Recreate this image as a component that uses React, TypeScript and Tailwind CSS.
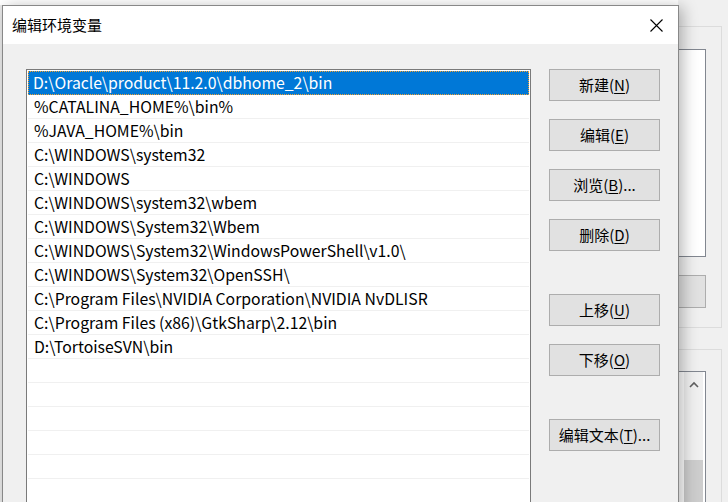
import React from "react";

const paths = [
  "D:\\Oracle\\product\\11.2.0\\dbhome_2\\bin",
  "%CATALINA_HOME%\\bin%",
  "%JAVA_HOME%\\bin",
  "C:\\WINDOWS\\system32",
  "C:\\WINDOWS",
  "C:\\WINDOWS\\system32\\wbem",
  "C:\\WINDOWS\\System32\\Wbem",
  "C:\\WINDOWS\\System32\\WindowsPowerShell\\v1.0\\",
  "C:\\WINDOWS\\System32\\OpenSSH\\",
  "C:\\Program Files\\NVIDIA Corporation\\NVIDIA NvDLISR",
  "C:\\Program Files (x86)\\GtkSharp\\2.12\\bin",
  "D:\\TortoiseSVN\\bin",
  "",
  "",
  "",
  "",
  "",
  "",
  "",
];

const font = { fontFamily: '"Noto Sans CJK SC", "Noto Sans", sans-serif' };

type Btn = { label: string; mk: string; tail?: string; mt: string };

const buttons: Btn[] = [
  { label: "新建", mk: "N", mt: "mt-0" },
  { label: "编辑", mk: "E", mt: "mt-[18px]" },
  { label: "浏览", mk: "B", tail: "...", mt: "mt-[18px]" },
  { label: "删除", mk: "D", mt: "mt-[18px]" },
  { label: "上移", mk: "U", mt: "mt-[43px]" },
  { label: "下移", mk: "O", mt: "mt-[18px]" },
  { label: "编辑文本", mk: "T", tail: "...", mt: "mt-[43px]" },
];

const WinButton: React.FC<Btn> = ({ label, mk, tail, mt }) => (
  <button
    className={`${mt} w-[111px] h-[32px] bg-[#e1e1e1] border border-[#adadad] text-[15px] text-black flex items-center justify-center`}
  >
    {label}(<span className="underline underline-offset-2">{mk}</span>){tail}
  </button>
);

// background window peeking out on the right
const Backdrop: React.FC = () => (
  <div className="absolute inset-0 bg-[#f0f0f0] flex justify-end pr-[6px]">
    <div className="flex flex-col w-[120px]">
      <div className="mt-[26px] h-[302px] border border-[#dcdcdc] flex flex-col items-end pr-[15px]">
        <div className="mt-[22px] w-[80px] h-[208px] bg-white border border-[#828790]" />
        <div className="mt-[18px] w-[80px] h-[33px] bg-[#e1e1e1] border border-[#adadad]" />
      </div>
      <div className="mt-[21px] flex-1 border border-b-0 border-[#dcdcdc] flex flex-col items-end pr-[15px]">
        <div className="mt-[21px] w-[80px] flex-1 bg-white border border-b-0 border-[#828790] flex justify-end pr-[2px]">
          <div className="w-[19px] bg-[#f0f0f0] flex flex-col items-center">
            <svg width="12" height="8" viewBox="0 0 12 8" className="mt-[9px]">
              <path d="M2 6 L6 2 L10 6" stroke="#606060" strokeWidth="1.6" fill="none" />
            </svg>
            <div className="mt-[71px] w-[19px] flex-1 bg-[#cdcdcd]" />
          </div>
        </div>
      </div>
    </div>
  </div>
);

export default function App() {
  return (
    <div className="relative w-[728px] h-[502px] overflow-hidden" style={font}>
      <Backdrop />
      <div className="absolute left-0 top-0 w-[678px] h-[5px] bg-white" />
      <div className="absolute left-0 top-[5px] w-[2px] h-[497px] bg-[#e9e9e9]" />

      {/* dialog */}
      <div className="absolute left-[2px] top-[5px] w-[677px] h-[510px] bg-[#f0f0f0] border border-[#888888] shadow-[4px_2px_14px_rgba(0,0,0,0.28)] flex flex-col">
        <div className="h-[38px] bg-white flex items-center justify-between pl-[9px] pr-[15px] shrink-0">
          <span className="text-[15px] text-black">编辑环境变量</span>
          <svg width="13" height="13" viewBox="0 0 13 13">
            <path d="M0.5 0.5 L12.5 12.5 M12.5 0.5 L0.5 12.5" stroke="#000" strokeWidth="1.1" />
          </svg>
        </div>

        <div className="flex pl-[23px] pt-[25px]">
          <div className="w-[505px] h-[460px] bg-white border border-[#7a7a7a] p-px overflow-hidden">
            {paths.map((p, i) =>
              i === 0 ? (
                <div
                  key={i}
                  className="h-[24px] bg-[#0078d7] text-white text-[15.8px] leading-[24px] pl-[5px] outline outline-1 outline-dotted outline-[#f0a030] -outline-offset-1"
                >
                  {p}
                </div>
              ) : (
                <div
                  key={i}
                  className="h-[24px] border-b border-[#f0f0f0] text-black text-[15.8px] leading-[23px] pl-[6px] whitespace-nowrap"
                >
                  {p}
                </div>
              )
            )}
          </div>

          <div className="ml-[18px] flex flex-col">
            {buttons.map((b) => (
              <WinButton key={b.label} {...b} />
            ))}
          </div>
        </div>
      </div>
    </div>
  );
}
